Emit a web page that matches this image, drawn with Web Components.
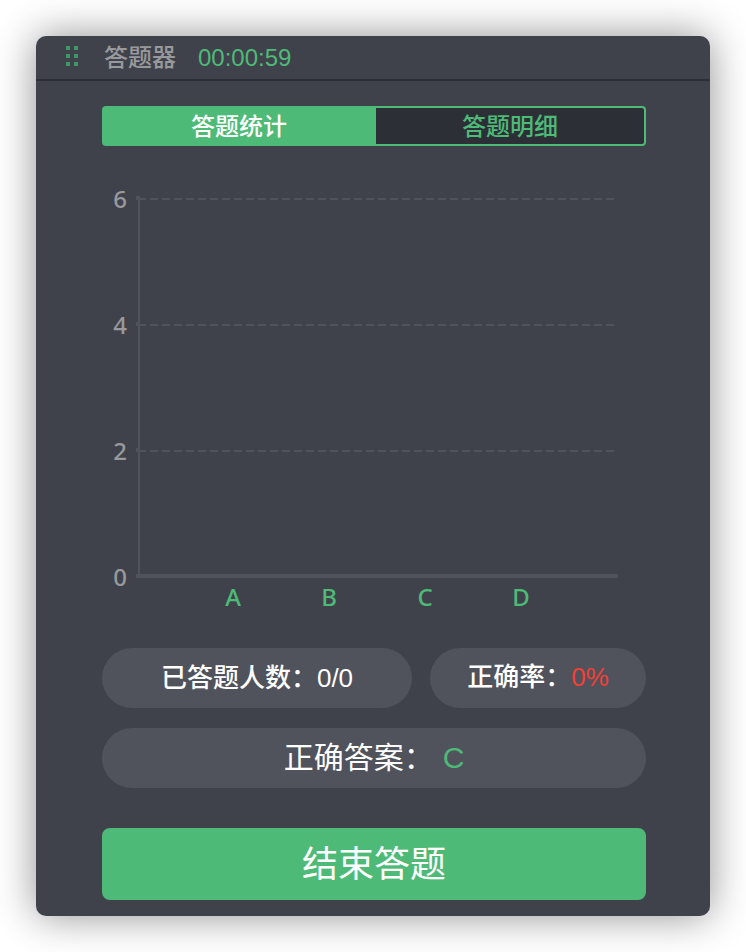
<!DOCTYPE html>
<html lang="zh-CN">
<head>
<meta charset="utf-8">
<meta name="viewport" content="width=device-width, initial-scale=1">
<title>答题器</title>
<style>
  body {
    margin: 0;
    background: #fff;
    color: #fff;
    font-family: "Liberation Sans", "Noto Sans CJK SC", sans-serif;
    font-weight: 500;
    --panel: #40424b;
    --rule: #2d2f37;
    --pill: #50525c;
    --green: #4eba78;
    --red: #f04137;
    --muted: #98999c;
  }
</style>
</head>
<body>
<answer-panel>
  <panel-header slot="header" time="00:00:59">答题器</panel-header>
  <tab-switch></tab-switch>
  <answer-chart></answer-chart>
  <stat-grid>
    <stat-pill label="已答题人数：">0/0</stat-pill>
    <stat-pill label="正确率：" tone="red">0%</stat-pill>
    <stat-pill label="正确答案：" tone="green" size="large">C</stat-pill>
  </stat-grid>
  <end-button>结束答题</end-button>
</answer-panel>

<script>
const define = (name, markup, setup) => {
  customElements.define(name, class extends HTMLElement {
    connectedCallback() {
      if (this.shadowRoot) return;
      const root = this.attachShadow({ mode: "open" });
      root.innerHTML = markup;
      if (setup) setup(this, root);
    }
  });
};

define("answer-panel", `
  <style>
    :host { display: block; margin: 36px; background: var(--panel); border-radius: 10px;
      box-shadow: 0 0 40px rgba(0,0,0,.44); }
    main { display: flex; flex-direction: column; padding: 25px 64px 16px 66px; }
  </style>
  <slot name="header"></slot>
  <main><slot></slot></main>`);

define("panel-header", `
  <style>
    :host { display: block; }
    header { display: flex; align-items: center; height: 43px; padding-left: 30px; border-bottom: 2px solid var(--rule);
      font-size: 24px; line-height: 43px; }
    svg { display: block; width: 12px; height: 20px; margin-bottom: 3px; fill: #3d9767; }
    h1 { margin: 0 22px 0 26px; font: inherit; color: var(--muted); }
    time { color: var(--green); }
  </style>
  <header>
    <svg viewBox="0 0 12 20" aria-hidden="true"><path d="M0 0h4v4H0zM8 0h4v4H8zM0 8h4v4H0zM8 8h4v4H8zM0 16h4v4H0zM8 16h4v4H8z"/></svg>
    <h1><slot></slot></h1><time></time>
  </header>`, (host, root) => {
  root.querySelector("time").textContent = host.getAttribute("time");
});

define("tab-switch", `
  <style>
    :host { display: block; }
    div { display: grid; grid-template-columns: 274fr 270fr; }
    button { height: 40px; padding: 0; border: 2px solid var(--green); background: var(--rule); font: inherit;
      font-size: 24px; line-height: 38px; color: var(--green); cursor: pointer; }
    button[aria-selected=true] { background: var(--green); color: #fff; }
    button:first-child { border-radius: 4px 0 0 4px; }
    button:last-child { border-left: 0; border-radius: 0 4px 4px 0; }
  </style>
  <div role="tablist">
    <button type="button" role="tab" aria-selected="true">答题统计</button>
    <button type="button" role="tab" aria-selected="false">答题明细</button>
  </div>`, (host, root) => {
  const tabs = root.querySelectorAll("button");
  tabs.forEach(t => t.addEventListener("click", () =>
    tabs.forEach(o => o.setAttribute("aria-selected", String(o === t)))));
});

define("answer-chart", `
  <style>
    :host { display: grid; grid-template-columns: 34px 1fr; padding: 39px 28px 36px 0;
      font-family: "Noto Sans", sans-serif; font-size: 24px; line-height: 28px; font-weight: 500; }
    .y { display: flex; flex-direction: column; justify-content: space-between; height: 406px;
      padding-right: 9px; text-align: right; color: var(--muted); }
    .plot { padding-top: 11px; }
    .band { height: 126px; background:
      linear-gradient(var(--pill) 0 0) 0 0 / 4px 4px no-repeat,
      linear-gradient(var(--pill) 0 0) 2px 0 / 2px 100% no-repeat,
      repeating-linear-gradient(90deg, var(--pill) 0 8px, transparent 8px 12px) 2px 2px / 100% 2px no-repeat; }
    .base { height: 4px; background: var(--pill); }
    .x { display: grid; grid-template-columns: repeat(4, 1fr); padding: 5px 49px 1px; text-align: center; color: var(--green); }
  </style>
  <div class="y"><span>6</span><span>4</span><span>2</span><span>0</span></div>
  <div class="plot">
    <div class="band"></div><div class="band"></div><div class="band"></div>
    <div class="base"></div>
    <div class="x"><span>A</span><span>B</span><span>C</span><span>D</span></div>
  </div>`);

define("stat-grid", `
  <style>
    :host { display: grid; grid-template-columns: 310fr 216fr; gap: 20px 18px; }
    ::slotted([size=large]) { grid-column: 1 / -1; }
  </style><slot></slot>`);

define("stat-pill", `
  <style>
    :host { display: flex; justify-content: center; align-items: center; height: 60px; border-radius: 30px;
      background: var(--pill); font-size: 26px; line-height: 60px; white-space: nowrap; }
    :host([size=large]) { font-size: 30px; font-weight: 400; gap: 9px; }
    :host([tone=red]) { padding-bottom: 2px; height: 58px; }
    :host([tone=red]) b { color: var(--red); }
    :host([tone=green]) b { color: var(--green); }
    b { font-weight: inherit; }
  </style>
  <span></span><b><slot></slot></b>`, (host, root) => {
  root.querySelector("span").textContent = host.getAttribute("label");
});

define("end-button", `
  <style>
    :host { display: block; margin-top: 40px; }
    button { display: block; width: 100%; height: 72px; padding: 2px 0 0; border: 0; border-radius: 8px;
      background: var(--green); color: #fff; font: inherit; font-size: 36px; font-weight: 400; line-height: 70px; cursor: pointer; }
  </style>
  <button type="button"><slot></slot></button>`);
</script>
</body>
</html>
